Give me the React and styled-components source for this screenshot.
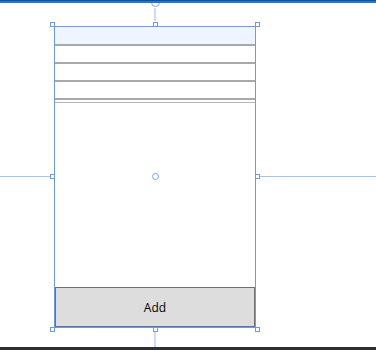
import React from 'react'
import styled, { createGlobalStyle } from 'styled-components'

const GlobalStyle = createGlobalStyle`
  html, body {
    margin: 0;
    padding: 0;
    background: #ffffff;
    overflow: hidden;
  }
  body {
    font-family: "Open Sans", "Noto Sans", "Liberation Sans", sans-serif;
  }
`

const Surface = styled.div`
  width: 376px;
  height: 350px;
  display: flex;
  flex-direction: column;
  overflow: hidden;
  background: #ffffff;
`

const TopBar = styled.div`
  position: relative;
  z-index: 5;
  height: 3px;
  flex: none;
  border-top: 1px solid #1f4f88;
  background: #1c7ad6;
  box-sizing: border-box;
`

const Stage = styled.div`
  flex: 1;
  padding: 23px 0 0 54px;
`

const BottomBar = styled.div`
  position: relative;
  z-index: 5;
  height: 3px;
  flex: none;
  background: #2f2f31;
`

const Frame = styled.div`
  position: relative;
  width: 202px;
  height: 302px;
  box-sizing: border-box;
  border: 1px solid #6b9be7;
  display: flex;
  flex-direction: column;
`

const List = styled.div`
  flex: 1;
  display: flex;
  flex-direction: column;
`

const Item = styled.div`
  height: ${({ $first }) => ($first ? 17 : 16)}px;
  flex: none;
  background: ${({ $selected }) => ($selected ? '#eef5fe' : '#ffffff')};
  border-bottom: 2px solid #a9a9ab;
`

const Separator = styled.div`
  margin-top: 2px;
  height: 1px;
  background: #b4b4b6;
`

const AddButton = styled.button`
  height: 40px;
  flex: none;
  margin: 0;
  box-sizing: border-box;
  border: 1px solid #707070;
  background: #dddddd;
  font-family: "Open Sans", "Noto Sans", "Liberation Sans", sans-serif;
  font-size: 12px;
  color: #000000;
  padding: 0;
`

const Handle = styled.div`
  position: absolute;
  left: ${({ $x }) => $x}px;
  top: ${({ $y }) => $y}px;
  width: 5px;
  height: 5px;
  box-sizing: border-box;
  border: 1px solid #6b9be7;
  background: #ffffff;
`

const GuideH = styled.div`
  position: absolute;
  top: 149px;
  left: ${({ $x }) => $x}px;
  width: ${({ $w }) => $w}px;
  height: 1px;
  background: #a3c5f5;
`

const GuideV = styled.div`
  position: absolute;
  left: 99px;
  top: ${({ $y }) => $y}px;
  width: 2px;
  height: ${({ $h }) => $h}px;
  background: #cadcf8;
`

const Ring = styled.div`
  position: absolute;
  left: ${({ $x }) => $x}px;
  top: ${({ $y }) => $y}px;
  width: ${({ $d }) => $d}px;
  height: ${({ $d }) => $d}px;
  box-sizing: border-box;
  border: 1px solid #7ea6ea;
  border-radius: 50%;
`

const handles = [
  [-5, -5], [98, -5], [200, -5],
  [-5, 147], [200, 147],
  [-5, 300], [98, 300], [200, 300],
]

const App = () => {
  return (
    <Surface>
      <GlobalStyle />
      <TopBar />
      <Stage>
        <Frame>
          <List>
            <Item $first $selected />
            <Item />
            <Item />
            <Item />
            <Separator />
          </List>
          <AddButton>Add</AddButton>

          <GuideH $x={-55} $w={50} />
          <GuideH $x={205} $w={130} />
          <GuideV $y={-19} $h={13} />
          <GuideV $y={305} $h={16} />
          <Ring $x={96} $y={-29} $d={9} />
          <Ring $x={97} $y={146} $d={7} />
          {handles.map(([x, y], i) => (
            <Handle key={i} $x={x} $y={y} />
          ))}
        </Frame>
      </Stage>
      <BottomBar />
    </Surface>
  )
}

export default App
